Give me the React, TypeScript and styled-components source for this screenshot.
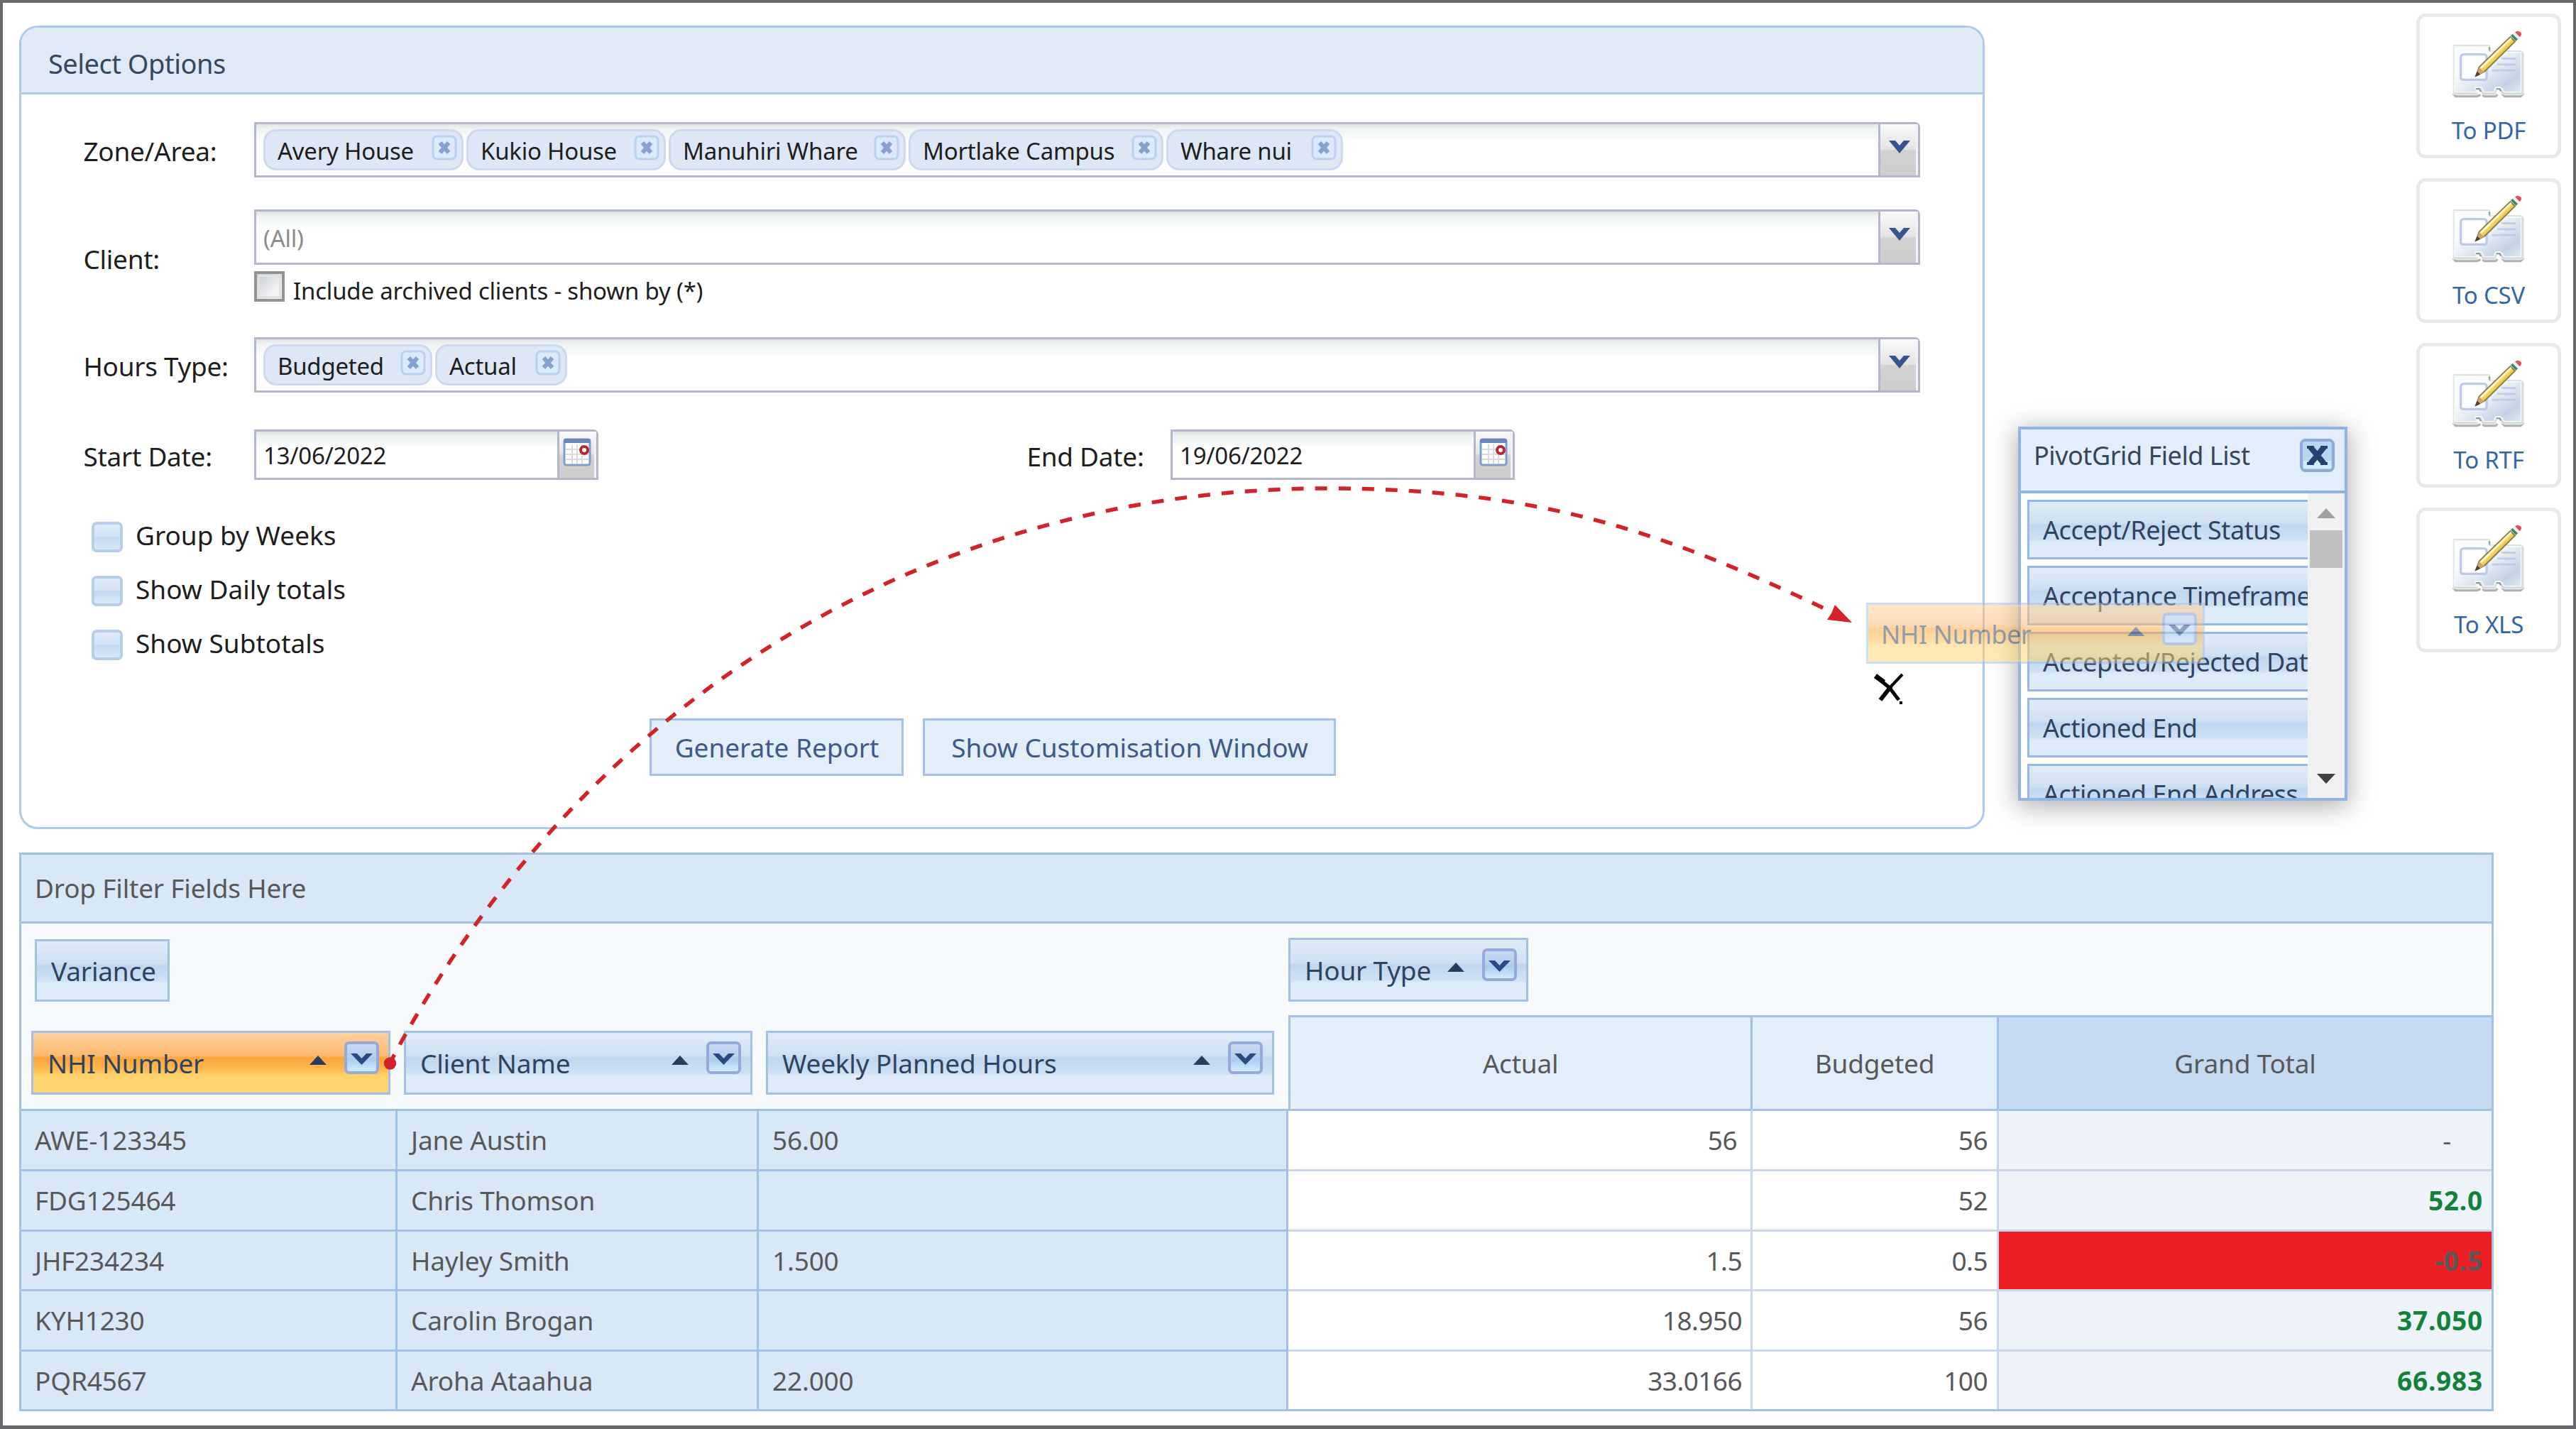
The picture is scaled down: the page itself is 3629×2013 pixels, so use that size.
import * as React from 'react';
import styled, {createGlobalStyle, css} from 'styled-components';

const colors = {
  frame: '#68686d',
  panelBorder: '#aecaea',
  panelHeader: '#e0eaf6',
  inputBorder: '#b4b6ca',
  gridBorder: '#a3c0e6',
  cellBorder: '#c8d5eb',
  fieldCell: '#d8e8f6',
  headerCell: '#e2effb',
  totalHeader: '#c6daf1',
  totalCell: '#eef3fa',
  cellText: '#58585a',
  chipText: '#2f4360',
  red: '#d2232a',
};

const GlobalStyle = createGlobalStyle`
  * {
    box-sizing: border-box;
  }

  body {
    margin: 0;
    background: #fff;
    font-family: 'Noto Sans', 'Open Sans', sans-serif;
    font-size: 37px;
    line-height: 50px;
    letter-spacing: -0.2px;
    color: #1e1e1e;
    white-space: nowrap;
  }

  svg {
    display: block;
    flex: none;
  }
`;

const Frame = styled.div`
  position: relative;
  width: 3629px;
  height: 2013px;
  border: 4px solid ${colors.frame};
  border-bottom-width: 5px;
  padding-left: 23px;
  overflow: hidden;
`;

const TopArea = styled.div`
  display: flex;
  justify-content: space-between;
  align-items: flex-start;
  padding-right: 17px;
`;

/* ---------- Select options panel ---------- */

const Panel = styled.section`
  width: 2769px;
  height: 1132px;
  margin-top: 32px;
  border: 3px solid ${colors.panelBorder};
  border-radius: 26px;
  overflow: hidden;
`;

const PanelHeader = styled.header`
  height: 94px;
  padding: 25px 0 0 38px;
  border-bottom: 3px solid ${colors.panelBorder};
  background: ${colors.panelHeader};
  color: #34495f;
  font-size: 38px;
  letter-spacing: -0.5px;
`;

const PanelBody = styled.div`
  display: flex;
  flex-direction: column;
  padding: 39px 0 0 86px;
`;

const FormRow = styled.div<{gap?: number}>`
  display: flex;
  align-items: center;
  margin-top: ${({gap}) => gap || 0}px;
`;

const Label = styled.label<{width?: number; shift?: number}>`
  width: ${({width}) => width || 242}px;
  padding: ${({shift}) => shift || 4}px 0 0 1.5px;
  letter-spacing: -0.3px;
`;

const Input = styled.div<{width: number; height?: number}>`
  display: flex;
  width: ${({width}) => width}px;
  height: ${({height}) => height || 78}px;
  border: 3px solid ${colors.inputBorder};
  border-top-right-radius: 7px;
  background: linear-gradient(#dfe4e6 0, #f0f3f3 7px, #f7f9fa 18px, #fff 26px);
  font-size: 33px;
  letter-spacing: -0.25px;
`;

const InputContent = styled.div<{placeholder?: boolean}>`
  display: flex;
  flex: 1;
  align-items: center;
  gap: 4px;
  padding: 0 10px;
  color: ${({placeholder}) => placeholder ? '#8c8c8c' : '#1e1e1e'};
`;

const InputValue = styled.span`
  padding-top: 3px;
`;

const InputButton = styled.div<{width: number}>`
  width: ${({width}) => width}px;
  padding-top: 21px;
  border-left: 3px solid ${colors.inputBorder};
  box-shadow: inset -3px 0 #f3f3f4;
  background: linear-gradient(#fafafa, #e4e4e4 48%, #d2d2d2 52%, #cdcdcd);

  svg {
    margin: 0 auto;
  }
`;

const TagBox = styled.div<{width: number}>`
  display: flex;
  justify-content: space-between;
  width: ${({width}) => width}px;
  height: 58px;
  padding: 3px 6px 0 17px;
  border: 3px solid #ccd9ef;
  border-radius: 18px;
  background: #dde7f5;
`;

const TagMark = styled.div`
  padding-top: 2px;
`;

const ArchivedRow = styled.div`
  display: flex;
  gap: 12px;
  height: 52px;
  padding-top: 9px;
  font-size: 33px;
  letter-spacing: -0.2px;
`;

const ArchivedText = styled.span`
  padding-top: 3px;
`;

const GreyCheckbox = styled.div`
  width: 43px;
  height: 43px;
  border: 4px solid #949494;
  outline: 3px solid #e1e1e1;
  outline-offset: -8px;
  background: linear-gradient(135deg, #c5cad6, #f4f4f4 70%);
`;

const OptionList = styled.div`
  display: flex;
  flex-direction: column;
  gap: 33px;
  margin: 59px 0 0 13px;
`;

const Option = styled.div`
  display: flex;
  align-items: center;
  gap: 18px;
  height: 43px;
  letter-spacing: 0;
`;

const OptionText = styled.span`
  padding-bottom: 5px;
`;

const BlueCheckbox = styled.div`
  width: 44px;
  height: 43px;
  border: 4px solid #b7cdec;
  border-radius: 7px;
  background: linear-gradient(#dfeaf7, #d3e3f5 48%, #c2d9f1 52%, #dceaf8);
`;

const ButtonRow = styled.div`
  display: flex;
  gap: 27px;
  margin: 82px 0 0 799px;
`;

const Button = styled.button<{width: number}>`
  width: ${({width}) => width}px;
  height: 81px;
  padding: 0 0 0 1px;
  border: 3px solid ${colors.gridBorder};
  background: #e2eefa;
  color: #3f5a87;
  font: inherit;
  letter-spacing: -0.05px;
`;

/* ---------- Export buttons ---------- */

const ExportList = styled.div`
  display: flex;
  flex-direction: column;
  gap: 28px;
  margin-top: 15px;
`;

const ExportCard = styled.div`
  display: flex;
  flex-direction: column;
  align-items: center;
  width: 204px;
  height: 204px;
  padding-top: 17px;
  border: 5px solid #eae8e9;
  border-radius: 13px;
  color: #3565a3;
  font-size: 33px;
`;

const ExportText = styled.span`
  margin-top: 21px;
`;

/* ---------- Pivot grid ---------- */

const Pivot = styled.section`
  width: 3486px;
  height: 787px;
  margin-top: 33px;
  border: 3px solid ${colors.gridBorder};
  color: ${colors.cellText};
`;

const FilterArea = styled.div`
  display: flex;
  align-items: center;
  height: 97px;
  padding: 0 19px;
  border-bottom: 3px solid ${colors.gridBorder};
  background: ${colors.fieldCell};
`;

const PivotHead = styled.div`
  display: grid;
  grid-template-columns: 1785px 1695px;
  height: 261px;
  background: #f8fbfe;
`;

const DataArea = styled.div`
  padding: 22px 0 0 19px;
`;

const RowFields = styled.div`
  display: flex;
  gap: 19px;
  margin: 41px 0 0 -5px;
`;

const ColumnArea = styled.div`
  height: 129px;
  padding-top: 20px;
`;

const chipGradient = css`
  background: linear-gradient(#e0ebf7, #cfe0f3 38%, #c0d6ef 42%, #cfe1f4 68%, #deebf8 72%);
`;

const hotGradient = css`
  background: linear-gradient(#ffd09c, #fdb970 38%, #fba53a 42%, #fcb94e 60%, #fed26b 72%, #fed773);
`;

const Chip = styled.div<{width: number; height?: number; hot?: boolean}>`
  display: flex;
  flex: none;
  align-items: center;
  width: ${({width}) => width}px;
  height: ${({height}) => height || 90}px;
  padding: 0 13px 0 20px;
  border: 3px solid ${colors.gridBorder};
  color: ${colors.chipText};
  ${({hot}) => hot ? hotGradient : chipGradient}
`;

const ChipText = styled.span`
  flex: 1;
  padding-top: 1px;
`;

const SortMark = styled.div`
  margin: 0 25px 7px 0;
`;

const FilterMark = styled.div`
  margin-bottom: 14px;
`;

const HeaderRow = styled.div`
  display: grid;
  grid-template-columns: 654px 347px 694px;
  height: 132px;
  border-top: 3px solid ${colors.gridBorder};
`;

const HeaderCell = styled.div<{first?: boolean; total?: boolean}>`
  display: flex;
  align-items: center;
  justify-content: center;
  border-left: ${({first}) => first ? `3px solid ${colors.gridBorder}` : 'none'};
  border-right: ${({total}) => total ? 'none' : `3px solid ${colors.gridBorder}`};
  background: ${({total}) => total ? colors.totalHeader : colors.headerCell};
`;

const DataRow = styled.div<{height: number}>`
  display: grid;
  grid-template-columns: 530px 509px 746px 654px 347px 694px;
  height: ${({height}) => height}px;
`;

const FieldCell = styled.div`
  display: flex;
  align-items: center;
  padding-left: 19px;
  border-top: 3px solid ${colors.gridBorder};
  border-right: 3px solid ${colors.gridBorder};
  background: ${colors.fieldCell};
`;

const ValueCell = styled.div<{first?: boolean; inset?: number}>`
  display: flex;
  align-items: center;
  justify-content: flex-end;
  padding-right: ${({inset}) => inset || 12}px;
  border-top: 3px solid ${({first}) => first ? colors.gridBorder : colors.cellBorder};
  border-right: 3px solid ${colors.cellBorder};
  letter-spacing: -0.6px;
`;

const TotalCell = styled(ValueCell)<{tone: string}>`
  border-right: none;
  background: ${({tone}) => tone === 'negative' ? '#ec2024' : colors.totalCell};
  background-clip: padding-box;
  color: ${({tone}) => tone === 'positive' ? '#12823b' : colors.cellText};
  font-weight: ${({tone}) => tone === 'empty' ? 400 : 700};
  letter-spacing: 0.8px;
`;

/* ---------- Floating field list ---------- */

const FieldWindow = styled.aside`
  position: absolute;
  left: 2839px;
  top: 597px;
  width: 464px;
  height: 527px;
  border: 4px solid #90b4e5;
  background: #fff;
  box-shadow: 0 6px 34px 2px rgba(0, 0, 0, 0.32);
  font-size: 36px;
  letter-spacing: -0.45px;
`;

const WindowHeader = styled.div`
  display: flex;
  justify-content: space-between;
  height: 90px;
  padding: 12px 14px 0 18px;
  border-bottom: 4px solid #90b4e5;
  background: #e2eefb;
  color: #35455b;
`;

const WindowTitle = styled.span`
  letter-spacing: -0.45px;
`;

const CloseButton = styled.div`
  margin-top: 1px;
`;

const WindowBody = styled.div`
  display: flex;
  height: 429px;
`;

const FieldList = styled.div`
  display: flex;
  flex: 1;
  flex-direction: column;
  gap: 9px;
  padding: 9px 0 0 9px;
  overflow: hidden;
`;

const FieldItem = styled(Chip)`
  padding: 2px 0 0 19px;
  border-color: #97b8e4;
`;

const ScrollBar = styled.div`
  display: flex;
  flex-direction: column;
  align-items: center;
  width: 52px;
  padding: 21px 0 20px;
  background: #f1f1f1;
`;

const ScrollThumb = styled.div`
  width: 46px;
  height: 53px;
  margin: 17px 0 auto;
  background: #c0c0c0;
`;

/* ---------- Drag layer ---------- */

const DragChip = styled(Chip)`
  position: absolute;
  left: 2625px;
  top: 845px;
  padding: 2px 8px 0 18px;
  opacity: 0.52;
  font-size: 36px;
  letter-spacing: -0.5px;
`;

const DragPath = styled.svg`
  position: absolute;
  left: -4px;
  top: -4px;
`;

const DropIcon = styled.svg`
  position: absolute;
  left: 2636px;
  top: 944px;
`;

const ArrowDown = () => (
  <svg width="32" height="24" viewBox="0 0 32 24">
    <path d="M1 2H10L16 9L22 2H31L16 20Z" fill="#36548f" />
  </svg>
);

const TagClose = () => (
  <svg width="36" height="36" viewBox="0 0 36 36">
    <rect x="2" y="2" width="32" height="32" rx="6" fill="#dceafa" stroke="#b9d1ef" strokeWidth="3" />
    <path d="M12 11L24 25M24 11L12 25" stroke="#86a0cf" strokeWidth="6" />
  </svg>
);

const CalendarIcon = () => (
  <svg width="40" height="40" viewBox="0 0 40 40">
    <rect x="2" y="2" width="36" height="36" rx="3" fill="#fff" stroke="#7d9dcc" strokeWidth="3" />
    <rect x="1" y="1" width="38" height="6" rx="2" fill="#6688ba" />
    <path d="M13 9V36M20 9V36M27 9V36M4 16H36M4 23H36M4 30H36" stroke="#d8dade" strokeWidth="2" />
    <circle cx="30" cy="17" r="5" fill="#fff" stroke="#b5282f" strokeWidth="4" />
  </svg>
);

const SortIcon = () => (
  <svg width="24" height="13" viewBox="0 0 24 13">
    <path d="M12 0L24 13H0Z" fill="#283c5c" />
  </svg>
);

const FilterIcon = () => (
  <svg width="49" height="46" viewBox="0 0 49 46">
    <defs>
      <linearGradient id="filterFill" x1="0" y1="0" x2="0" y2="1">
        <stop offset="0" stopColor="#ccdaf1" />
        <stop offset="0.45" stopColor="#b6d0ee" />
        <stop offset="0.55" stopColor="#a9cbed" />
        <stop offset="1" stopColor="#d5f0ff" />
      </linearGradient>
    </defs>
    <rect x="2" y="2" width="45" height="42" rx="5" fill="url(#filterFill)" stroke="#97a9db" strokeWidth="4" />
    <path d="M9 17H18L24.500 24L31 17H40L24.500 33Z" fill="#2a4b82" />
  </svg>
);

const CloseIcon = () => (
  <svg width="49" height="47" viewBox="0 0 49 47">
    <rect x="2" y="2" width="45" height="43" rx="6" fill="#b8d5f2" stroke="#8fa9dd" strokeWidth="4" />
    <rect x="5" y="31" width="39" height="11" fill="#d3ecfd" />
    <path d="M15 12L34 35M34 12L15 35" stroke="#23426f" strokeWidth="8" />
    <path d="M10 12H20M29 12H39M10 35H20M29 35H39" stroke="#23426f" strokeWidth="4" />
  </svg>
);

const ExportIcon = () => (
  <svg width="105" height="97" viewBox="160 68 316 290">
    <defs>
      <linearGradient id="cardFill" x1="0" y1="0" x2="1" y2="1">
        <stop offset="0.3" stopColor="#fbfdfd" />
        <stop offset="0.55" stopColor="#e3eaf2" />
        <stop offset="0.8" stopColor="#c3d2e3" />
        <stop offset="1" stopColor="#dceaf4" />
      </linearGradient>
      <linearGradient id="pencilFill" x1="0" y1="0" x2="1" y2="1">
        <stop offset="0.38" stopColor="#fdf3a5" />
        <stop offset="0.52" stopColor="#f0cf4d" />
        <stop offset="0.65" stopColor="#b18a3e" />
      </linearGradient>
    </defs>
    <path d="M166 340L176 352H268L282 346M290 346L298 352H346L354 344M372 342L384 352H452L466 340" stroke="#aeb1b0" strokeWidth="9" fill="none" />
    <path
      d="M168 136H320V160H454L464 168V344H374L364 322H350L344 344H290L284 322H262L270 344H168Z"
      fill="#cfd3d3"
      stroke="#dfe3e2"
      strokeWidth="5"
      strokeLinejoin="round"
    />
    <path
      d="M172 142H314V166H454V334H382L368 314H346L338 334H296L286 314H258L266 334H172Z"
      fill="url(#cardFill)"
      stroke="#f4f9fa"
      strokeWidth="5"
    />
    <path d="M262 320H276L284 332M350 320H362L368 330M320 144V158" stroke="#999c9b" strokeWidth="7" fill="none" />
    <rect x="198" y="174" width="110" height="108" rx="12" fill="#fcfdff" stroke="#bccae8" strokeWidth="10" />
    <path d="M370 192H432M352 217H432M330 242H432" stroke="#bfcbe7" strokeWidth="8" />
    <path d="M262 266L276 228L408 100L428 120L300 246Z" fill="url(#pencilFill)" stroke="#8b7247" strokeWidth="5" />
    <path d="M284 232L412 106" stroke="#fffbe0" strokeWidth="7" />
    <path d="M262 266L276 230L298 248Z" fill="#d7a36c" />
    <path d="M258 270L267 246L282 259Z" fill="#4e463d" />
    <path d="M410 96L432 118L442 108L420 86Z" fill="#3f8b57" />
    <path d="M418 88L440 110L448 102L426 80Z" fill="#ececec" />
    <path d="M428 80L448 101Q460 90 452 80Q440 70 428 80Z" fill="#d85560" />
  </svg>
);

type TagProps = {
  text: string;
  width: number;
};

const Tag: React.FunctionComponent<TagProps> = ({text, width}) => (
  <TagBox width={width}>
    <span>{text}</span>
    <TagMark><TagClose /></TagMark>
  </TagBox>
);

type FieldChipProps = {
  text: string;
  width: number;
  hot?: boolean;
};

const FieldChip: React.FunctionComponent<FieldChipProps> = ({text, width, hot}) => (
  <Chip width={width} hot={hot}>
    <ChipText>{text}</ChipText>
    <SortMark><SortIcon /></SortMark>
    <FilterMark><FilterIcon /></FilterMark>
  </Chip>
);

const zones = [
  {text: 'Avery House', width: 282},
  {text: 'Kukio House', width: 281},
  {text: 'Manuhiri Whare', width: 334},
  {text: 'Mortlake Campus', width: 359},
  {text: 'Whare nui', width: 249},
];

const hourTypes = [
  {text: 'Budgeted', width: 238},
  {text: 'Actual', width: 186},
];

const options = ['Group by Weeks', 'Show Daily totals', 'Show Subtotals'];

const exportsTo = ['To PDF', 'To CSV', 'To RTF', 'To XLS'];

const fields = [
  'Accept/Reject Status',
  'Acceptance Timeframe',
  'Accepted/Rejected Date',
  'Actioned End',
  'Actioned End Address',
];

const rows = [
  {nhi: 'AWE-123345', name: 'Jane Austin', planned: '56.00', actual: '56', budgeted: '56', total: '-', tone: 'empty', height: 85},
  {nhi: 'FDG125464', name: 'Chris Thomson', planned: '', actual: '', budgeted: '52', total: '52.0', tone: 'positive', height: 85},
  {nhi: 'JHF234234', name: 'Hayley Smith', planned: '1.500', actual: '1.5', budgeted: '0.5', total: '-0.5', tone: 'negative', height: 84},
  {nhi: 'KYH1230', name: 'Carolin Brogan', planned: '', actual: '18.950', budgeted: '56', total: '37.050', tone: 'positive', height: 85},
  {nhi: 'PQR4567', name: 'Aroha Ataahua', planned: '22.000', actual: '33.0166', budgeted: '100', total: '66.983', tone: 'positive', height: 84},
];

const EndDate = styled.div`
  display: flex;
  align-items: center;
  margin-left: 602px;
`;

const DateButton = styled(InputButton)`
  padding: 9px 2px 0 0;
`;

const DateInput: React.FunctionComponent<{value: string}> = ({value}) => (
  <Input width={485} height={71}>
    <InputContent><InputValue>{value}</InputValue></InputContent>
    <DateButton width={55}><CalendarIcon /></DateButton>
  </Input>
);

const SelectOptions = () => (
  <Panel>
    <PanelHeader>Select Options</PanelHeader>
    <PanelBody>
      <FormRow>
        <Label>Zone/Area:</Label>
        <Input width={2347}>
          <InputContent>{zones.map(zone => <Tag key={zone.text} {...zone} />)}</InputContent>
          <InputButton width={56}><ArrowDown /></InputButton>
        </Input>
      </FormRow>
      <FormRow gap={45}>
        <Label shift={10}>Client:</Label>
        <div>
          <Input width={2347}>
            <InputContent placeholder><InputValue>(All)</InputValue></InputContent>
            <InputButton width={56}><ArrowDown /></InputButton>
          </Input>
          <ArchivedRow>
            <GreyCheckbox />
            <ArchivedText>Include archived clients - shown by (*)</ArchivedText>
          </ArchivedRow>
        </div>
      </FormRow>
      <FormRow gap={50}>
        <Label>Hours Type:</Label>
        <Input width={2347}>
          <InputContent>{hourTypes.map(type => <Tag key={type.text} {...type} />)}</InputContent>
          <InputButton width={56}><ArrowDown /></InputButton>
        </Input>
      </FormRow>
      <FormRow gap={52}>
        <Label>Start Date:</Label>
        <DateInput value="13/06/2022" />
        <EndDate>
          <Label width={204}>End Date:</Label>
          <DateInput value="19/06/2022" />
        </EndDate>
      </FormRow>
      <OptionList>
        {options.map(option => (
          <Option key={option}>
            <BlueCheckbox />
            <OptionText>{option}</OptionText>
          </Option>
        ))}
      </OptionList>
      <ButtonRow>
        <Button width={358}>Generate Report</Button>
        <Button width={582}>Show Customisation Window</Button>
      </ButtonRow>
    </PanelBody>
  </Panel>
);

const PivotGrid = () => (
  <Pivot>
    <FilterArea>Drop Filter Fields Here</FilterArea>
    <PivotHead>
      <DataArea>
        <Chip width={190} height={88}><ChipText>Variance</ChipText></Chip>
        <RowFields>
          <FieldChip text="NHI Number" width={506} hot />
          <FieldChip text="Client Name" width={491} />
          <FieldChip text="Weekly Planned Hours" width={716} />
        </RowFields>
      </DataArea>
      <div>
        <ColumnArea>
          <FieldChip text="Hour Type" width={338} />
        </ColumnArea>
        <HeaderRow>
          <HeaderCell first>Actual</HeaderCell>
          <HeaderCell>Budgeted</HeaderCell>
          <HeaderCell total>Grand Total</HeaderCell>
        </HeaderRow>
      </div>
    </PivotHead>
    {rows.map((row, index) => (
      <DataRow key={row.nhi} height={row.height}>
        <FieldCell>{row.nhi}</FieldCell>
        <FieldCell>{row.name}</FieldCell>
        <FieldCell>{row.planned}</FieldCell>
        <ValueCell first={index === 0} inset={index === 0 ? 19 : 12}>{row.actual}</ValueCell>
        <ValueCell first={index === 0} inset={13}>{row.budgeted}</ValueCell>
        <TotalCell first={index === 0} inset={index === 0 ? 56 : 12} tone={row.tone}>{row.total}</TotalCell>
      </DataRow>
    ))}
  </Pivot>
);

const PivotFieldList = () => (
  <FieldWindow>
    <WindowHeader>
      <WindowTitle>PivotGrid Field List</WindowTitle>
      <CloseButton><CloseIcon /></CloseButton>
    </WindowHeader>
    <WindowBody>
      <FieldList>
        {fields.map(field => <FieldItem key={field} width={460} height={84}>{field}</FieldItem>)}
      </FieldList>
      <ScrollBar>
        <svg width="26" height="14" viewBox="0 0 26 14"><path d="M13 0L26 14H0Z" fill="#a0a0a0" /></svg>
        <ScrollThumb />
        <svg width="26" height="14" viewBox="0 0 26 14"><path d="M0 0H26L13 14Z" fill="#404040" /></svg>
      </ScrollBar>
    </WindowBody>
  </FieldWindow>
);

const App = () => (
  <>
    <GlobalStyle />
    <Frame>
      <TopArea>
        <SelectOptions />
        <ExportList>
          {exportsTo.map(text => (
            <ExportCard key={text}>
              <ExportIcon />
              <ExportText>{text}</ExportText>
            </ExportCard>
          ))}
        </ExportList>
      </TopArea>
      <PivotGrid />
      <PivotFieldList />
      <DragChip width={477} height={86} hot>
        <ChipText>NHI Number</ChipText>
        <SortMark><SortIcon /></SortMark>
        <FilterMark><FilterIcon /></FilterMark>
      </DragChip>
      <DragPath width="3629" height="2013" viewBox="0 0 3629 2013" fill="none">
        <path
          d="M549 1498C819 985 1310 688 1870 688C2170 688 2349 751 2580 862"
          stroke={colors.red}
          strokeWidth="5.500"
          strokeDasharray="17 16"
          strokeDashoffset="-30"
        />
        <circle cx="549.500" cy="1498" r="8.700" fill={colors.red} />
        <path d="M2609 877L2574 873L2580 864L2585 852Z" fill={colors.red} />
      </DragPath>
      <DropIcon width="46" height="48" viewBox="0 0 46 48" fill="none" stroke="#000">
        <path d="M3 5L22 21L35 38" strokeWidth="5" />
        <path d="M2 4L14 13" strokeWidth="7" />
        <path d="M40 2L22 21" strokeWidth="4" />
        <path d="M24 19L9 38" strokeWidth="6" />
        <path d="M38 40V44" strokeWidth="4" />
      </DropIcon>
    </Frame>
  </>
);

export default App;
